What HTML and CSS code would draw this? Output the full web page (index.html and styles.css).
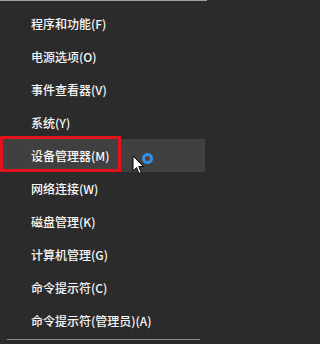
FILE: index.html
```html
<!DOCTYPE html>
<html lang="zh-CN">
<head>
<meta charset="utf-8">
<title>菜单</title>
<link rel="stylesheet" href="styles.css">
</head>
<body>
<div class="menu">
  <div class="item">程序和功能(F)</div>
  <div class="item">电源选项(O)</div>
  <div class="item">事件查看器(V)</div>
  <div class="item">系统(Y)</div>
  <div class="item active">设备管理器(M)</div>
  <div class="item">网络连接(W)</div>
  <div class="item">磁盘管理(K)</div>
  <div class="item">计算机管理(G)</div>
  <div class="item">命令提示符(C)</div>
  <div class="item">命令提示符(管理员)(A)</div>
  <div class="sep"></div>
  <div class="redbox"></div>
  <div class="busy"></div>
  <svg class="cursor" width="13" height="21" viewBox="0 0 13 21">
    <path d="M1 1 L1 16 L4.5 12.5 L7 18.5 L9.3 17.5 L6.8 11.6 L11.5 11.6 Z" fill="#fff" stroke="#000" stroke-width="1" stroke-linejoin="miter"/>
  </svg>
</div>
</body>
</html>
```
FILE: styles.css
```css
html, body {
  margin: 0;
  padding: 0;
  background: #2b2b2b;
}
.menu {
  position: relative;
  width: 207px;
  height: 344px;
  box-sizing: border-box;
  border-top: 1px solid #a0a0a0;
  padding-top: 6px;
  background: #2b2b2b;
  font-family: "Noto Sans CJK SC", "Microsoft YaHei", sans-serif;
  font-size: 12px;
  font-weight: 500;
  color: #f7f7f7;
}
.item {
  height: 33px;
  display: flex;
  align-items: center;
  padding-left: 31px;
  margin-right: 2px;
  white-space: nowrap;
}
.item.active {
  background: #404040;
}
.sep {
  height: 1px;
  margin: 2px 7px 0 7px;
  background: #8a8a8a;
}
.redbox {
  position: absolute;
  left: 0;
  top: 135px;
  width: 121px;
  height: 36px;
  box-sizing: border-box;
  border: 3px solid #e3121c;
}
.busy {
  position: absolute;
  left: 142px;
  top: 152px;
  width: 11px;
  height: 11px;
  box-sizing: border-box;
  border-radius: 50%;
  border: 3px solid #2f93ea;
  background: #6a3a22;
}
.cursor {
  position: absolute;
  left: 132px;
  top: 154px;
}
```
